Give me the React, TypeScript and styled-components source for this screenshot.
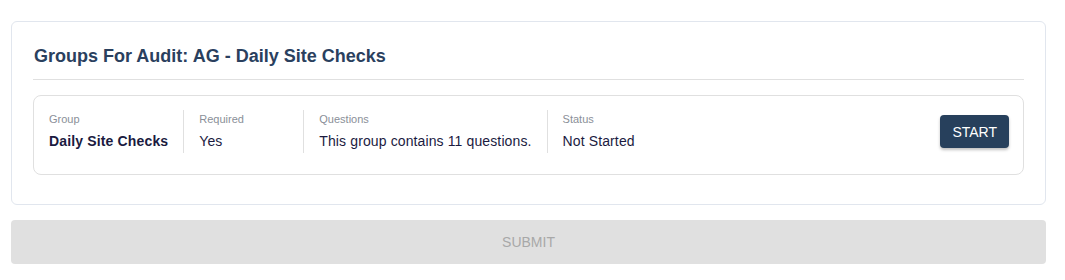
import React from "react";
import styled, { createGlobalStyle } from "styled-components";

const Global = createGlobalStyle`
  html, body { margin: 0; padding: 0; background: #fff; }
  body { font-family: "Liberation Sans", Arial, sans-serif; }
  * { box-sizing: border-box; }
`;

const Page = styled.div`
  width: 1035px;
  margin: 21px 0 0 11px;
  display: flex;
  flex-direction: column;
  gap: 15px;
`;

const Card = styled.section`
  border: 1px solid #e1e6ee;
  border-radius: 6px;
  background: #fff;
  padding: 22px 21px 29px 21px;
`;

const Title = styled.h2`
  margin: 0;
  font-size: 18px;
  font-weight: 700;
  color: #2a405e;
  line-height: 24px;
  padding-left: 1px;
  padding-bottom: 11px;
  border-bottom: 1px solid #e0e0e0;
`;

const GroupCard = styled.div`
  margin-top: 15px;
  border: 1px solid #e0e0e0;
  border-radius: 8px;
  padding: 14px 15px 21px 0;
  display: flex;
  align-items: center;
`;

const Cell = styled.div<{ $min?: number; $last?: boolean }>`
  padding: 0 15px;
  min-width: ${(p) => (p.$min ? `${p.$min}px` : "0")};
  border-right: ${(p) => (p.$last ? "none" : "1px solid #e0e0e0")};
  display: flex;
  flex-direction: column;
  gap: 7px;
  height: 43px;
  justify-content: center;
`;

const Label = styled.span`
  font-size: 11px;
  line-height: 12px;
  color: #8a8f98;
`;

const Value = styled.span<{ $bold?: boolean }>`
  font-size: 14px;
  line-height: 18px;
  color: #1b1b3f;
  font-weight: ${(p) => (p.$bold ? 700 : 400)};
  letter-spacing: ${(p) => (p.$bold ? "0.15px" : "0.12px")};
  white-space: nowrap;
`;

const Spacer = styled.div`
  flex: 1;
`;

const StartButton = styled.button`
  height: 33px;
  padding: 0 12px;
  margin-right: -1px;
  border: none;
  border-radius: 4px;
  background: #27405c;
  color: #fff;
  font-family: "Liberation Sans", Arial, sans-serif;
  font-size: 14px;
  box-shadow: 0 2px 3px rgba(0, 0, 0, 0.25);
  cursor: pointer;
`;

const SubmitButton = styled.button`
  height: 44px;
  width: 100%;
  border: none;
  border-radius: 4px;
  background: #e0e0e0;
  color: #a8a8a8;
  font-family: "Liberation Sans", Arial, sans-serif;
  font-size: 14px;
`;

export default function App() {
  return (
    <>
      <Global />
      <Page>
        <Card>
          <Title>Groups For Audit: AG - Daily Site Checks</Title>
          <GroupCard>
            <Cell>
              <Label>Group</Label>
              <Value $bold>Daily Site Checks</Value>
            </Cell>
            <Cell $min={120}>
              <Label>Required</Label>
              <Value>Yes</Value>
            </Cell>
            <Cell>
              <Label>Questions</Label>
              <Value>This group contains 11 questions.</Value>
            </Cell>
            <Cell $last>
              <Label>Status</Label>
              <Value>Not Started</Value>
            </Cell>
            <Spacer />
            <StartButton>START</StartButton>
          </GroupCard>
        </Card>
        <SubmitButton disabled>SUBMIT</SubmitButton>
      </Page>
    </>
  );
}
